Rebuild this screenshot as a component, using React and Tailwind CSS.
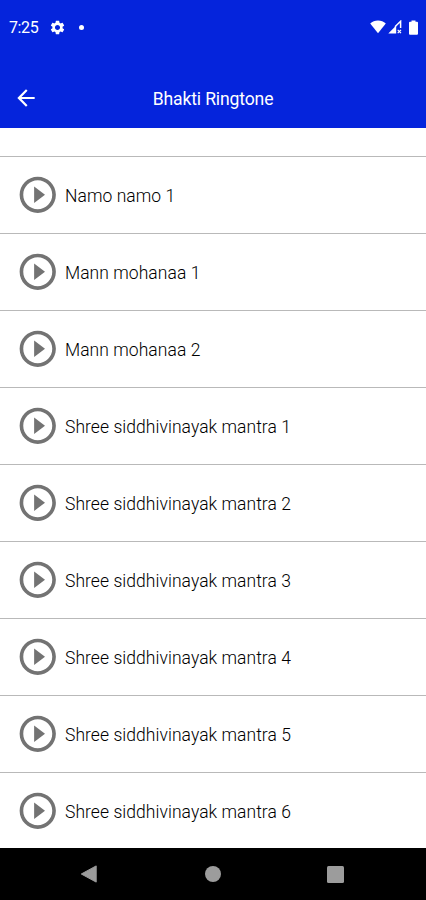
const tracks = [
  'Namo namo 1',
  'Mann mohanaa 1',
  'Mann mohanaa 2',
  'Shree siddhivinayak mantra 1',
  'Shree siddhivinayak mantra 2',
  'Shree siddhivinayak mantra 3',
  'Shree siddhivinayak mantra 4',
  'Shree siddhivinayak mantra 5',
  'Shree siddhivinayak mantra 6',
];

function GearIcon() {
  return (
    <svg className="ml-[10px] size-[17px]" viewBox="0 0 24 24" fill="currentColor">
      <path d="M19.14 12.94c.04-.3.06-.61.06-.94 0-.32-.02-.64-.07-.94l2.03-1.58a.49.49 0 0 0 .12-.61l-1.92-3.32a.488.488 0 0 0-.59-.22l-2.39.96c-.5-.38-1.03-.7-1.62-.94l-.36-2.54a.484.484 0 0 0-.48-.41h-3.84c-.24 0-.43.17-.47.41l-.36 2.54c-.59.24-1.13.57-1.62.94l-2.39-.96c-.22-.08-.47 0-.59.22L2.74 8.87c-.12.21-.08.47.12.61l2.03 1.58c-.05.3-.09.63-.09.94s.02.64.07.94l-2.03 1.58a.49.49 0 0 0-.12.61l1.92 3.32c.12.22.37.29.59.22l2.39-.96c.5.38 1.03.7 1.62.94l.36 2.54c.05.24.24.41.48.41h3.84c.24 0 .44-.17.47-.41l.36-2.54c.59-.24 1.13-.56 1.62-.94l2.39.96c.22.08.47 0 .59-.22l1.92-3.32c.12-.22.07-.47-.12-.61l-2.01-1.58zM12 15.6c-1.98 0-3.6-1.62-3.6-3.6s1.62-3.6 3.6-3.6 3.6 1.62 3.6 3.6-1.62 3.6-3.6 3.6z" />
    </svg>
  );
}

function StatusBar() {
  return (
    <div className="flex h-[54px] items-center pl-[9px] pr-[8px]">
      <span className="mt-px w-[30px] whitespace-nowrap text-[16px] leading-5 tracking-[-0.4px]">7:25</span>
      <GearIcon />
      <span className="ml-[13px] size-[5px] rounded-full bg-white" />
      <svg className="ml-auto h-[14px] w-[16px]" viewBox="0 0 16 14" fill="currentColor">
        <path d="M8 13.3 0.2 3.6C2.3 1.7 5 0.6 8 0.6s5.7 1.1 7.8 3z" />
      </svg>
      <svg className="ml-[2px] h-[14px] w-[14px]" viewBox="0 0 14 14" fill="none">
        <path d="M0.3 13.5 8.2 5.6V13.5z" fill="currentColor" />
        <path d="M7 6.8 12.6 1.3V8" stroke="currentColor" strokeWidth="1.5" />
        <path d="M9.7 9.8 13 13.2M13 9.8 9.7 13.2" stroke="currentColor" strokeWidth="1.2" />
      </svg>
      <svg className="ml-[7px] h-[15px] w-[9px]" viewBox="0 0 9 15" fill="currentColor">
        <path d="M2.5 0.4h4v1.4H8a1 1 0 0 1 1 1V13.7a1 1 0 0 1-1 1H1a1 1 0 0 1-1-1V2.8a1 1 0 0 1 1-1h1.5z" />
      </svg>
    </div>
  );
}

function Header() {
  return (
    <header className="h-[128px] shrink-0 bg-[#0524dc] text-white">
      <StatusBar />
      <div className="mt-[14px] grid h-[60px] grid-cols-[52px_1fr_52px] items-center">
        <svg className="ml-[13px] size-[26px]" viewBox="0 0 24 24" fill="currentColor">
          <path d="M20 11H7.83l5.59-5.59L12 4l-8 8 8 8 1.41-1.41L7.83 13H20z" />
        </svg>
        <h1 className="mt-[2px] text-center text-[17.6px] leading-6 tracking-[-0.15px]">Bhakti Ringtone</h1>
      </div>
    </header>
  );
}

function Track({ name }) {
  return (
    <li className="flex h-[77px] shrink-0 items-center border-t border-[#b9b9b9] pl-4">
      <svg className="size-[43.5px] shrink-0 text-[#737373]" viewBox="0 0 24 24" fill="currentColor">
        <path d="M10 16.5l6-4.5-6-4.5v9zM12 2C6.48 2 2 6.48 2 12s4.48 10 10 10 10-4.48 10-10S17.52 2 12 2zm0 18c-4.41 0-8-3.59-8-8s3.59-8 8-8 8 3.59 8 8-3.59 8-8 8z" />
      </svg>
      <span className="mt-px ml-[5.5px] whitespace-nowrap text-[17.5px] font-[350] leading-6 tracking-[0.05px] text-black">{name}</span>
    </li>
  );
}

function NavBar() {
  return (
    <nav className="flex h-[52px] shrink-0 items-center bg-black pl-[80px] text-[#9c9c9c]">
      <svg className="h-[18px] w-[17px]" viewBox="0 0 17 18" fill="currentColor" stroke="currentColor" strokeLinejoin="round">
        <path d="M1.3 9 16.2 0.9V17.1z" />
      </svg>
      <span className="ml-[108px] size-4 rounded-full bg-[#9c9c9c]" />
      <span className="ml-[106px] size-[17px] rounded-[1.5px] bg-[#9c9c9c]" />
    </nav>
  );
}

export default function App() {
  return (
    <div className="flex h-[900px] w-[426px] flex-col overflow-hidden bg-white font-[Roboto,sans-serif]">
      <Header />
      <ul className="flex min-h-0 flex-1 flex-col overflow-hidden pt-7">
        {tracks.map((name) => (
          <Track key={name} name={name} />
        ))}
      </ul>
      <NavBar />
    </div>
  );
}
